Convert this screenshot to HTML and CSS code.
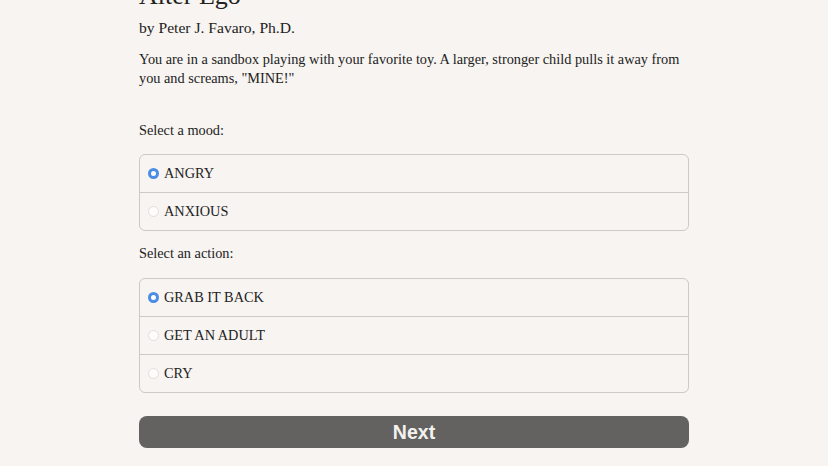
FILE: index.html
```html
<!DOCTYPE html>
<html>
<head>
<meta charset="utf-8">
<link rel="stylesheet" href="styles.css">
</head>
<body>
<main class="page">
  <h1 class="title">Alter Ego</h1>
  <p class="byline">by Peter J. Favaro, Ph.D.</p>
  <p class="scenario">You are in a sandbox playing with your favorite toy. A larger, stronger child pulls it away from you and screams, "MINE!"</p>

  <p class="prompt prompt-mood">Select a mood:</p>
  <div class="choices">
    <label class="choice"><span class="radio checked"></span><span class="choice-text">ANGRY</span></label>
    <label class="choice"><span class="radio"></span><span class="choice-text">ANXIOUS</span></label>
  </div>

  <p class="prompt prompt-action">Select an action:</p>
  <div class="choices">
    <label class="choice"><span class="radio checked"></span><span class="choice-text">GRAB IT BACK</span></label>
    <label class="choice"><span class="radio"></span><span class="choice-text">GET AN ADULT</span></label>
    <label class="choice"><span class="radio"></span><span class="choice-text">CRY</span></label>
  </div>

  <button class="next">Next</button>
</main>
</body>
</html>
```

FILE: styles.css
```css
html, body {
  margin: 0;
  padding: 0;
  background: #f7f4f1;
  overflow: hidden;
}
body {
  font-family: "Liberation Serif", "DejaVu Serif", serif;
  color: #222;
}
.page {
  width: 550px;
  margin: 0 auto;
  display: flex;
  flex-direction: column;
}
.title {
  margin: -19px 0 0;
  font-size: 26px;
  line-height: 30px;
  font-weight: normal;
}
.byline {
  margin: 7px 0 0;
  font-size: 15.6px;
  line-height: 20px;
}
.scenario {
  margin: 11.5px 0 0;
  font-size: 14.3px;
  line-height: 19px;
}
.prompt {
  margin: 0;
  font-size: 14.3px;
  line-height: 19px;
}
.prompt-mood { margin-top: 33px; }
.prompt-action { margin-top: 12.5px; }
.choices {
  margin-top: 14.5px;
  border: 1px solid #cdc9c5;
  border-radius: 6px;
  display: flex;
  flex-direction: column;
}
.prompt-action + .choices { margin-top: 15.5px; }
.choice {
  height: 37px;
  display: flex;
  align-items: center;
  padding-left: 8px;
  font-size: 14.3px;
}
.choice-text { margin-top: -1px; }
.choice + .choice {
  border-top: 1px solid #cdc9c5;
}
.radio {
  width: 11px;
  height: 11px;
  border-radius: 50%;
  box-sizing: border-box;
  border: 1px solid #e2dfdb;
  background: #fdfcfb;
  margin-right: 5px;
  margin-top: -1px;
}
.radio.checked {
  border: 3.5px solid #4a8ce6;
  background: #fff;
}
.next {
  margin-top: 23px;
  height: 32px;
  border: none;
  border-radius: 8px;
  background: #636260;
  color: #f4f2ef;
  font-family: "Liberation Sans", Arial, sans-serif;
  font-weight: bold;
  font-size: 19.5px;
  padding: 0;
}
```
